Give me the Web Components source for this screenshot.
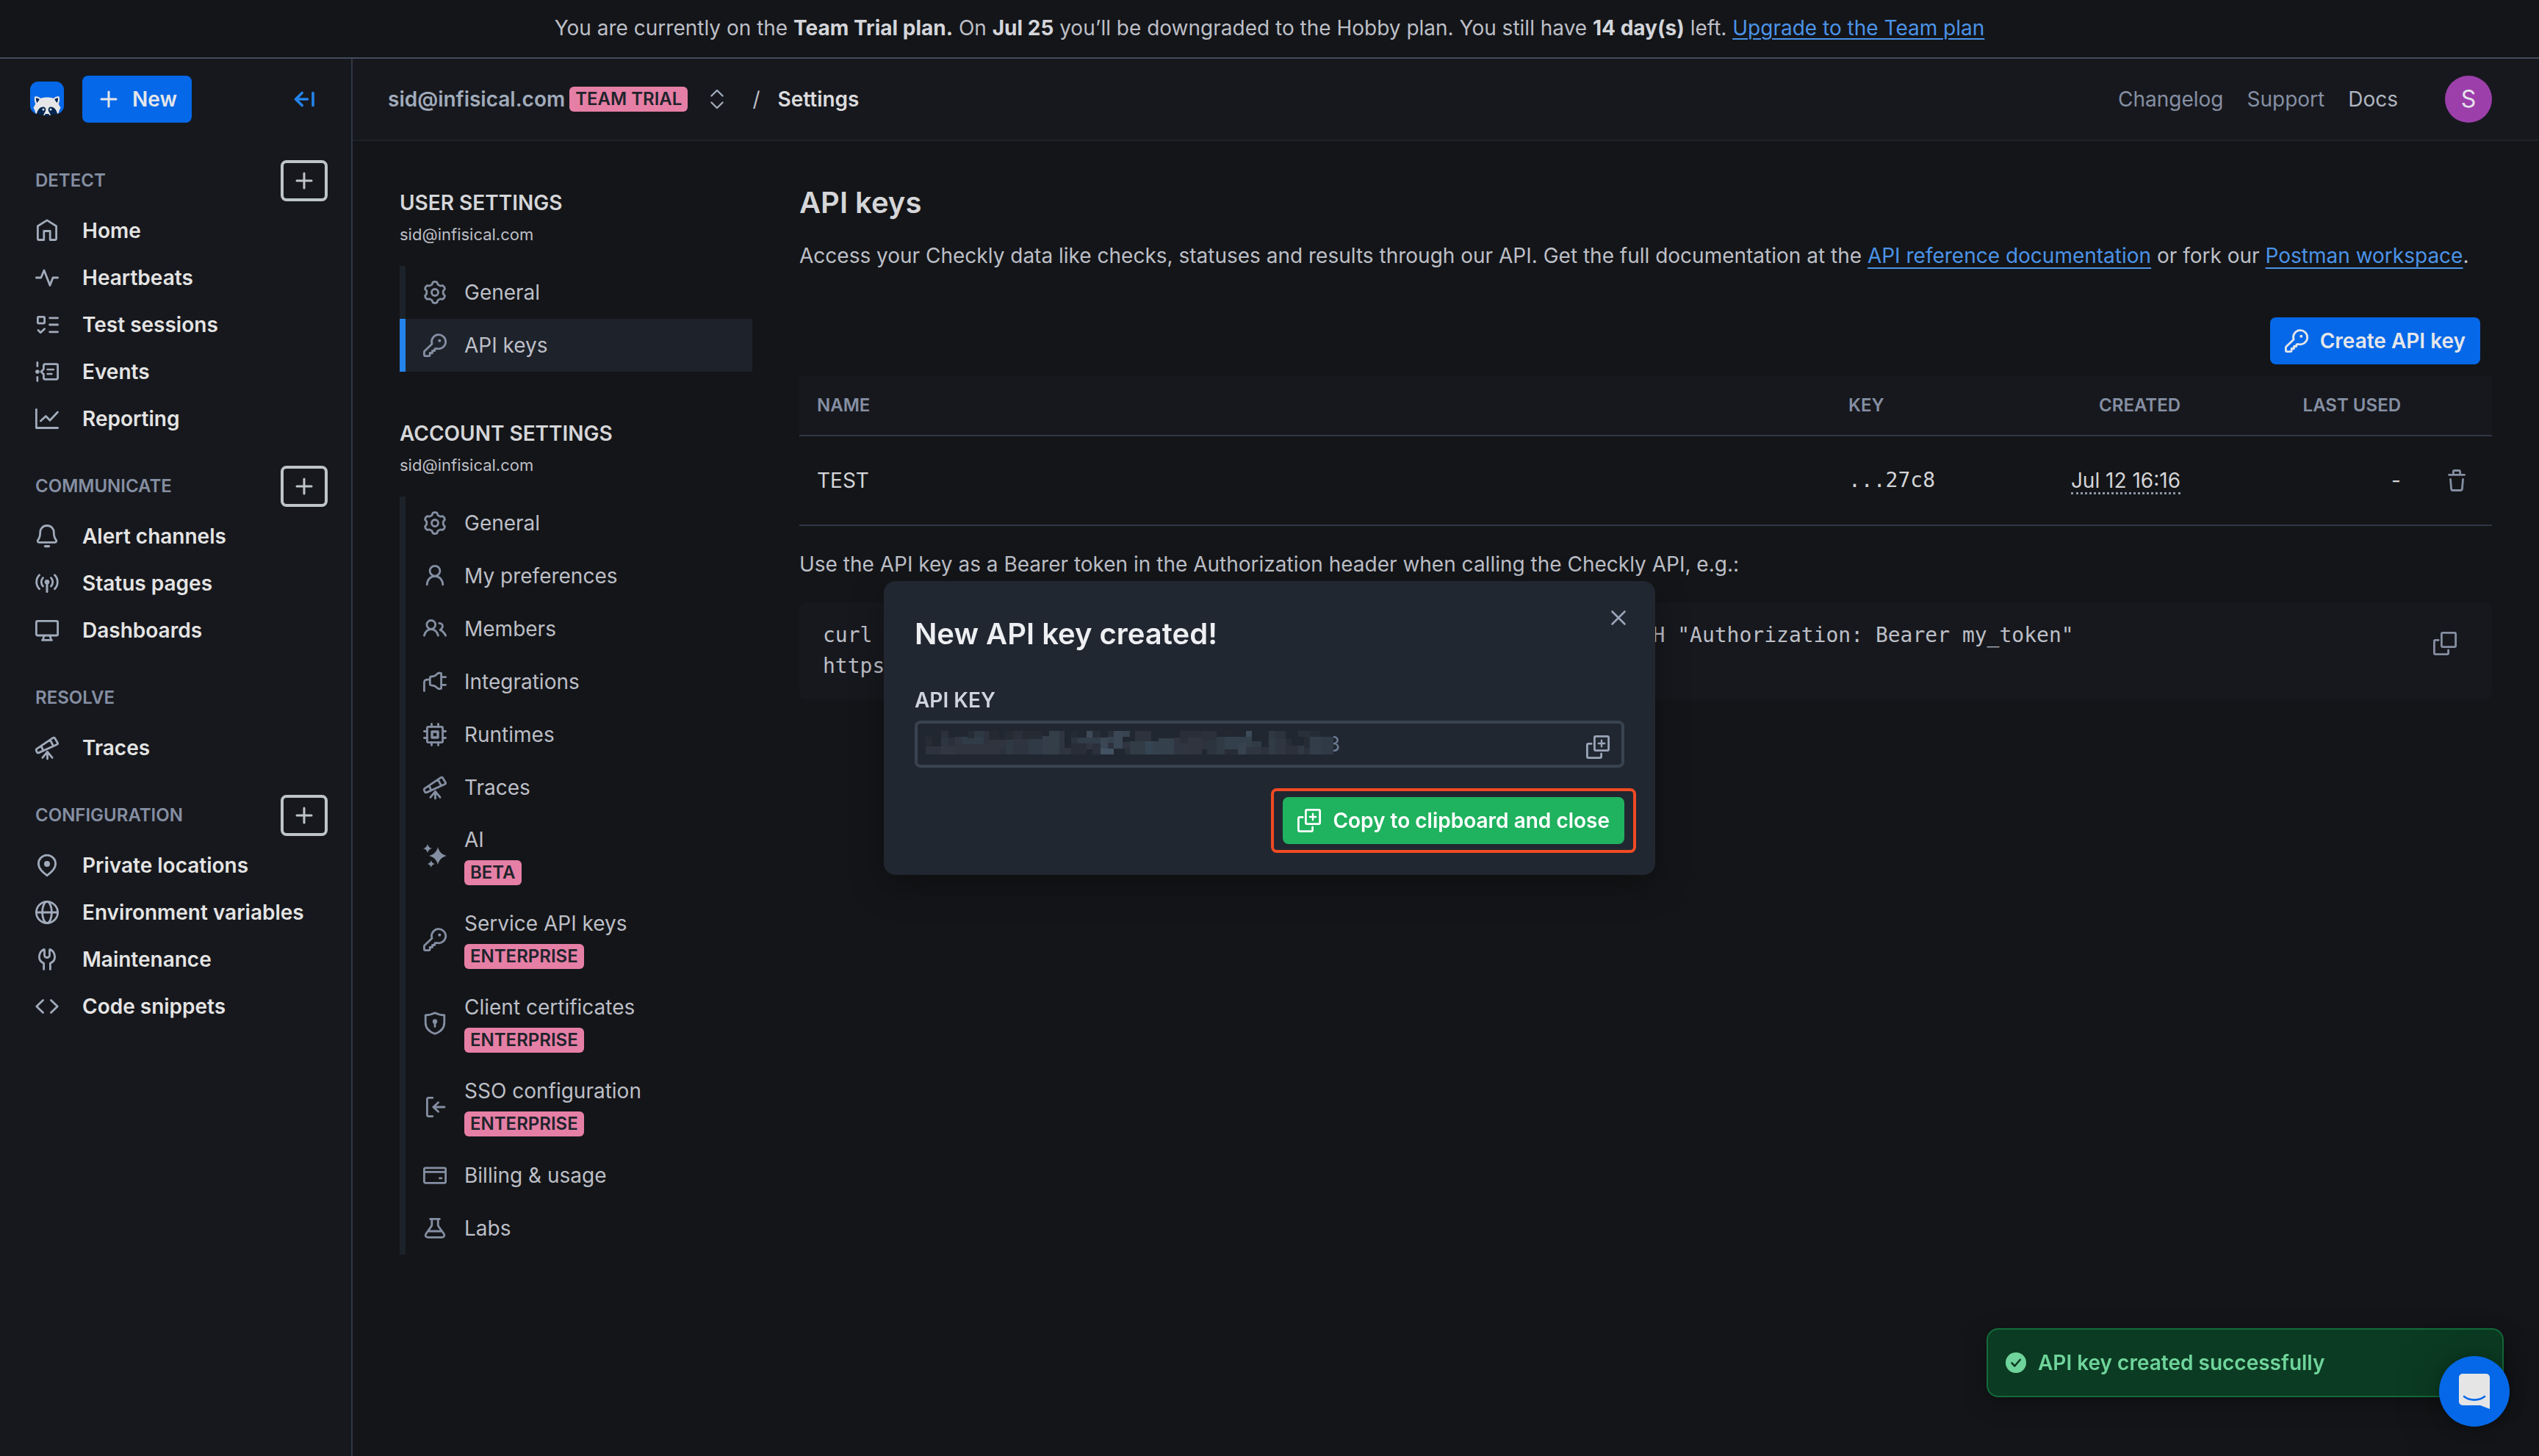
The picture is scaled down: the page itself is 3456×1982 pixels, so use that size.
<!DOCTYPE html>
<html lang="en">
<head>
<meta charset="utf-8">
<title>Settings - API keys</title>
<style>
  :root {
    --bg: #141518;
    --panel: #17181d;
    --raised: #1e222a;
    --line: #2f3845;
    --line-soft: #1d2129;
    --text: #dcdcdd;
    --text-2: #bcbfc7;
    --muted: #a1abbb;
    --faint: #858fa3;
    --blue: #0568e8;
    --link: #4b93e8;
    --pink: #e67fa5;
  }
  html, body { margin: 0; background: var(--bg); }
  body {
    font-family: Inter, "Liberation Sans", sans-serif;
    font-optical-sizing: none;
    font-size: 28px;
    line-height: 40px;
    color: var(--text-2);
  }
</style>
</head>
<body>
<checkly-app></checkly-app>

<script>
const define = (name, html, setup) => {
  const template = document.createElement('template');
  template.innerHTML = '<style>*{box-sizing:border-box}button,input{font:inherit;font-optical-sizing:inherit}</style>' + html;
  customElements.define(name, class extends HTMLElement {
    constructor() {
      super();
      this.attachShadow({ mode: 'open' }).append(template.content.cloneNode(true));
    }
    connectedCallback() { if (setup) setup(this, this.shadowRoot); }
  });
};

/* ---------- icons, all on a 32 unit grid ---------- */
const cogPoints = () => {
  const out = [];
  for (let k = 0; k < 6; k++) {
    for (const [r, d] of [[11.4, -21], [14.2, -11], [14.7, 0], [14.2, 11], [11.4, 21]]) {
      const a = (k * 60 - 90 + d) * Math.PI / 180;
      out.push((16 + r * Math.cos(a)).toFixed(2) + ',' + (16 + r * Math.sin(a)).toFixed(2));
    }
  }
  return out.join(' ');
};
const copyBase = '<rect x="11.4" y="1.4" width="19.2" height="19.2" rx="1.6"/><path d="M7.2 11.4H3a1.6 1.6 0 0 0-1.6 1.6v16A1.6 1.6 0 0 0 3 30.6h16a1.6 1.6 0 0 0 1.6-1.6v-4"/>';
const ICONS = {
  plus: '<path d="M16 6v20M6 16h20" stroke-width="3"/>',
  collapse: '<path d="M13.2 7.5 4.5 16l8.700 8.500M5 16h15.500M28 7.500v17" stroke-width="3.600"/>',
  home: '<path d="M16 1.900 3.400 9.800V27a1.500 1.500 0 0 0 1.500 1.500h6.900v-12h8.400v12h6.900a1.500 1.500 0 0 0 1.500-1.500V9.800z"/>',
  heartbeat: '<path d="M1.400 16h6.400L12 6l8 20.500L24 16h6.600"/>',
  tests: '<rect x="3.400" y="5.400" width="9.200" height="8.800" rx="1"/><path d="M4 23.500l3.200 3.200 5.400-5M19.600 6.800h11M19.600 16h11M19.600 25.800h11"/>',
  events: '<path d="M2.900 3.500v5M2.900 23.500v5"/><circle cx="2.900" cy="16" r="2.800" fill="currentColor" stroke="none"/><path d="M13.200 5.600h15.600a1.800 1.800 0 0 1 1.800 1.800v17.200a1.800 1.800 0 0 1-1.800 1.800H13.200a1.800 1.800 0 0 1-1.800-1.800v-5.200L8 16l3.400-3.400V7.400a1.800 1.800 0 0 1 1.800-1.800z"/><path d="M16.500 13h8.500M16.500 19h6" stroke-width="2.400"/>',
  chart: '<path d="M1.400 3.400v25.100h29.200M7.400 19l7-6.500 5.600 5.800L30.500 7"/>',
  bell: '<path d="M16 1.500c-5.700 0-9.300 4.100-9.300 9.300 0 5.700-.9 7.800-2.900 10-1.200 1.500-.4 3.500 1.400 3.500h21.600c1.800 0 2.600-2 1.400-3.500-2-2.200-2.900-4.300-2.900-10 0-5.200-3.600-9.300-9.300-9.300z"/><path d="M13.500 29.600h5" stroke-width="3.400"/>',
  antenna: '<circle cx="16" cy="14.300" r="3.300" fill="currentColor" stroke="none"/><path d="M16 15v12.600" stroke-width="3"/><path d="M5.600 4.800a13.500 13.500 0 0 0 0 19M26.400 4.800a13.500 13.500 0 0 1 0 19M10.500 8.600a8.300 8.300 0 0 0 0 11.400M21.500 8.600a8.300 8.300 0 0 1 0 11.400"/>',
  monitor: '<rect x="1.400" y="3.400" width="29.200" height="19.600" rx="1.800"/><path d="M12 23.200 10.500 29M20 23.200l1.500 5.800M9.500 29.400h13"/>',
  telescope: '<path d="M2 17.400 24.200 2.400c1-.6 2-.3 2.500.6l3.700 6.200c.5.900.1 1.900-.9 2.300L5 22.600c-1.200.5-2.200.1-2.800-.9l-.8-1.900c-.4-.9-.1-1.800.6-2.400zM8.200 13.800l2.600 5.800M20.400 5.400l3.900 7.800M16.500 31v-9.600M16.500 21.400 9.900 29.400M16.500 21.400l6.600 8"/>',
  pin: '<path d="M16 29.800C10.500 25.400 4.400 20.600 4.400 13.800a11.600 11.600 0 0 1 23.200 0c0 6.800-6.100 11.600-11.600 16z"/><circle cx="16" cy="14" r="4" fill="currentColor" stroke="none"/>',
  globe: '<circle cx="16" cy="16" r="14.600"/><ellipse cx="16" cy="16" rx="6.400" ry="14.600"/><path d="M1.400 16h29.200"/>',
  wrench: '<path d="M11.600 29.600v-8.400C7.700 19.600 5.400 16.600 5.400 12.800c0-4.600 2.300-8.200 5.600-10.200.8-.4 1.500 0 1.500.8v7.400c0 1.300 1.500 2.700 3.500 2.700s3.500-1.400 3.500-2.700V3.400c0-.8.7-1.200 1.500-.8 3.300 2 5.600 5.600 5.600 10.200 0 3.800-2.300 6.800-6.200 8.400v8.400"/>',
  code: '<path d="M10.600 7.600 1.800 16l8.800 8.400M21.400 7.600l8.800 8.400-8.800 8.400"/>',
  cog: '<polygon points="' + cogPoints() + '"/><circle cx="16" cy="16" r="4.500"/>',
  key: '<path d="M12 14.300a9.600 9.600 0 1 1 6.700 6.200l-2.900.3v2.700h-3.300v3H9.200v2.600c0 .9-.6 1.500-1.500 1.500H2.900c-.9 0-1.500-.6-1.500-1.500v-3.900c0-.5.200-1 .6-1.400z"/><circle cx="22.300" cy="9.800" r="2" fill="currentColor" stroke="none"/>',
  user: '<circle cx="16" cy="9.200" r="6.900"/><path d="M5.200 27.800C5.600 21 10 16.300 16 16.300S26.400 21 26.800 27.800"/>',
  users: '<circle cx="10.800" cy="10.400" r="5.900"/><path d="M1.400 25.200c1.400-5.400 4.900-8.600 9.400-8.600s8.200 3.200 9.600 8.600M21.800 8.400c2.800-.2 4.800 1.800 4.600 4.400-.1 2.100-1.400 3.600-3.400 4.600 3.400 1.400 5.800 4.200 7.600 7.800"/>',
  plug: '<path d="M1.400 28.600V17.400c0-2.600 1.700-4.300 4.300-4.300H9M11.200 9c3.800-.2 5.200-.8 7-2.900 1.600-2 4-2.500 6.400-1.500v20.600c-2.400 1-4.800.5-6.400-1.500-1.800-2.100-3.200-2.700-7-2.900-1.200-.1-1.900-.8-1.900-1.900v-8c0-1.100.7-1.800 1.900-1.900zM24.600 9.600h6M24.600 20.300h6"/>',
  cpu: '<rect x="5.400" y="5.400" width="21.200" height="21.200" rx="1.600"/><rect x="12" y="12" width="8" height="8" stroke-width="3.400"/><path d="M11.500 1.400v4M20.500 1.400v4M11.500 26.600v4M20.500 26.600v4M1.400 11.500h4M1.400 20.500h4M26.600 11.500h4M26.600 20.500h4"/>',
  sparkles: '<g fill="currentColor" stroke="none"><path d="M20 4c1.900 6.800 5.200 10.100 12 12-6.800 1.900-10.100 5.200-12 12-1.900-6.800-5.200-10.100-12-12 6.800-1.900 10.100-5.200 12-12z"/><path d="M6 0c.9 3.400 2.600 5.100 6 6-3.400.9-5.100 2.600-6 6-.9-3.400-2.600-5.100-6-6 3.400-.9 5.100-2.600 6-6z"/><path d="M10.800 22c.8 2.900 2.200 4.200 5 5-2.800.8-4.200 2.100-5 5-.8-2.900-2.200-4.200-5-5 2.800-.8 4.200-2.100 5-5z"/></g>',
  shield: '<path d="M16 1.800c3.600 2 8 3 12.800 3.200V15c0 7.600-4.600 12.400-12.800 15.300C7.800 27.400 3.200 22.600 3.200 15V5C8 4.800 12.400 3.800 16 1.800z"/><circle cx="16" cy="13.400" r="3.200" fill="currentColor" stroke="none"/><path d="M16 14v6.600"/>',
  signin: '<path d="M12.800 3.400H7.200A1.800 1.800 0 0 0 5.400 5.200v21.600a1.800 1.800 0 0 0 1.800 1.800h5.600M29 16H14M20.600 9.800 13.800 16l6.800 6.200"/>',
  card: '<rect x="1.400" y="5.800" width="29.200" height="20.600" rx="1.800"/><path d="M1.400 11.400h29.200M22.400 19.800h2.600"/>',
  flask: '<path d="M9.600 3.400h12.800M11.800 3.800v7.400c0 1-.3 1.700-.9 2.500L4 23.200c-1.800 2.600-.6 5.200 2.400 5.200h19.200c3 0 4.200-2.600 2.400-5.200l-6.900-9.500c-.6-.8-.9-1.500-.9-2.500V3.800M7 20h18"/>',
  trash: '<path d="M5.400 8.300h21.200M11.400 7.800V4a1.500 1.500 0 0 1 1.500-1.500h6.200A1.500 1.500 0 0 1 20.600 4v3.800M7.500 14.500l1.100 13.200a2 2 0 0 0 2 1.800h10.800a2 2 0 0 0 2-1.800l1.100-13.200"/>',
  copy: copyBase,
  copyplus: copyBase + '<path d="M21 6.800v8.400M16.800 11h8.400" stroke-width="2.400"/>',
  updown: '<path d="M8.400 11.500 16 4l7.600 7.500M8.400 20.500 16 28l7.600-7.500" stroke-width="2.400"/>',
  close: '<path d="M7.500 7.500l17 17M24.500 7.500l-17 17" stroke-width="2.600"/>',
  check: '<circle cx="16" cy="16" r="14" fill="currentColor" stroke="none"/><path d="M10.500 16.500l3.800 4 7.400-8.500" stroke="#0b3b22" stroke-width="2.600"/>'
};
define('ck-icon', `
  <style>
    :host { display: inline-flex; flex: none; width: 32px; height: 32px; }
    svg { width: 100%; height: 100%; fill: none; stroke: currentColor; stroke-width: 2.8; stroke-linecap: round; stroke-linejoin: round; overflow: visible; }
  </style>
  <svg viewBox="0 0 32 32" aria-hidden="true"></svg>`,
  (el, root) => { root.querySelector('svg').innerHTML = ICONS[el.getAttribute('name')]; });

/* ---------- small parts ---------- */
define('ck-badge', `
  <style>
    :host { display: inline-flex; align-items: center; height: 34px; padding: 0 8px; border-radius: 6px;
      background: var(--pink); color: #1f242c; font-size: 24px; font-weight: 600; line-height: 34px; }
  </style><slot></slot>`);

define('ck-button', `
  <style>
    :host { display: inline-flex; }
    button { display: inline-flex; align-items: center; gap: 16px; height: 64px; padding: 0 20px; border: 0;
      border-radius: 8px; background: var(--button-bg, var(--blue)); color: var(--button-fg, #e4e6ea);
      font-weight: 600; white-space: nowrap; }
    .icon { display: flex; }
  </style>
  <button type="button"><span class="icon"></span><span><slot></slot></span></button>`,
  (el, root) => { root.querySelector('.icon').innerHTML = `<ck-icon name="${el.getAttribute('icon')}"></ck-icon>`; });

define('trial-banner', `
  <style>
    :host { display: flex; justify-content: center; align-items: center; height: 80px; padding-bottom: 2px; box-sizing: border-box;
      border-bottom: 2px solid #414c5b; white-space: nowrap; }
    a { color: var(--link); text-underline-offset: 4px; text-decoration-thickness: 2px; }
    b { font-weight: 700; color: #d3d5da; }
  </style>
  <div>You are currently on the <b>Team Trial plan.</b> On <b>Jul 25</b> you’ll be downgraded to the Hobby plan. You still have <b>14 day(s)</b> left. <a href="#upgrade">Upgrade to the Team plan</a></div>`);

/* ---------- main navigation ---------- */
define('nav-item', `
  <style>
    :host { display: block; }
    a { display: flex; align-items: center; gap: 32px; height: 64px; color: #e4e4e4; font-weight: 600; text-decoration: none; white-space: nowrap; }
    span { display: flex; color: var(--muted); }
  </style>
  <a href="#"><span></span><slot></slot></a>`,
  (el, root) => { root.querySelector('span').innerHTML = `<ck-icon name="${el.getAttribute('icon')}"></ck-icon>`; });

define('nav-group', `
  <style>
    :host { display: block; }
    header { display: flex; align-items: center; justify-content: space-between; height: 56px; margin-bottom: 8px; }
    h2 { margin: 0; font-size: 24px; font-weight: 600; color: var(--faint); }
    button { display: flex; align-items: center; justify-content: center; width: 64px; height: 56px; padding: 0;
      border: 4px solid #bec5c9; border-radius: 8px; background: none; color: #bec5c9; }
    :host(:not([addable])) button { display: none; }
  </style>
  <header><h2></h2><button type="button" aria-label="Add"><ck-icon name="plus"></ck-icon></button></header>
  <slot></slot>`,
  (el, root) => { root.querySelector('h2').textContent = el.getAttribute('heading'); });

define('raccoon-logo', `
  <style>:host { display: block; width: 48px; height: 48px; } svg { display: block; width: 48px; height: 48px; }</style>
  <svg viewBox="0 0 48 48" aria-label="Checkly">
    <rect x="1" y="0" width="46" height="44" rx="11" fill="#0568e8"/>
    <path d="M7.300 20.500c2.600-.9 5.600-.2 7.600 2.400 5.200-2 13-2 18.200 0 2-2.600 5-3.300 7.600-2.400.8 3.400.6 6.800-1 9.800 1 2.300 1.700 3.600 2.900 5.300l-1.600 3-1.600 5H8.600l-1.600-5-1.600-3c1.200-1.700 1.900-3 2.900-5.300-1.600-3-1.800-6.400-1-9.800z" fill="#e6e6e8"/>
    <path d="M9 22.500c2-.3 3.600.5 4.700 2L10.500 29c-1.200-2-1.700-4.200-1.500-6.500zM39 22.500c-2-.3-3.600.5-4.700 2l3.200 4.500c1.200-2 1.700-4.200 1.500-6.500z" fill="#04244f"/>
    <path d="M10 43.800c1.200-5.600 4.600-9.600 9-9.300 2.800.3 3.800 2.300 3.100 5.300l-2.300 5.400C16 45.600 13 45 10 43.800zM38 43.800c-1.200-5.600-4.600-9.600-9-9.300-2.800.3-3.800 2.300-3.100 5.300l2.300 5.400C32 45.600 35 45 38 43.800z" fill="#04244f"/>
    <circle cx="19" cy="38" r="1.500" fill="#e6e6e8"/><circle cx="29" cy="38" r="1.500" fill="#e6e6e8"/>
    <path d="M19 46c1-3.500 3-5.800 5-5.800s4 2.300 5 5.800z" fill="#e6e6e8"/>
    <path d="M20.600 44.800c2-1 4.800-1 6.800 0-.6 1.800-1.800 2.800-3.400 2.800s-2.800-1-3.400-2.800z" fill="#04244f"/>
  </svg>`);

define('side-bar', `
  <style>
    :host { display: block; flex: none; box-sizing: border-box; width: 480px; padding: 0 32px 48px 48px; background: var(--panel); border-right: 2px solid var(--line); }
    .top { display: flex; align-items: center; height: 110px; margin-left: -8px; }
    ck-button { margin-left: 24px; }
    .collapse { display: flex; margin: 0 16px 0 auto; padding: 0; border: 0; background: none; color: #2484ec; }
    nav { display: flex; flex-direction: column; gap: 32px; margin-top: 28px; }
  </style>
  <div class="top">
    <raccoon-logo></raccoon-logo>
    <ck-button icon="plus">New</ck-button>
    <button class="collapse" type="button" aria-label="Collapse sidebar"><ck-icon name="collapse"></ck-icon></button>
  </div>
  <nav>
    <nav-group heading="DETECT" addable>
      <nav-item icon="home">Home</nav-item>
      <nav-item icon="heartbeat">Heartbeats</nav-item>
      <nav-item icon="tests">Test sessions</nav-item>
      <nav-item icon="events">Events</nav-item>
      <nav-item icon="chart">Reporting</nav-item>
    </nav-group>
    <nav-group heading="COMMUNICATE" addable>
      <nav-item icon="bell">Alert channels</nav-item>
      <nav-item icon="antenna">Status pages</nav-item>
      <nav-item icon="monitor">Dashboards</nav-item>
    </nav-group>
    <nav-group heading="RESOLVE">
      <nav-item icon="telescope">Traces</nav-item>
    </nav-group>
    <nav-group heading="CONFIGURATION" addable>
      <nav-item icon="pin">Private locations</nav-item>
      <nav-item icon="globe">Environment variables</nav-item>
      <nav-item icon="wrench">Maintenance</nav-item>
      <nav-item icon="code">Code snippets</nav-item>
    </nav-group>
  </nav>`);

/* ---------- header ---------- */
define('top-bar', `
  <style>
    :host { display: flex; align-items: center; justify-content: space-between; box-sizing: border-box; height: 112px; padding: 0 64px 0 48px;
      background: var(--panel); border-bottom: 2px solid var(--line-soft); white-space: nowrap; }
    .crumbs, .links { display: flex; align-items: center; }
    .account { display: flex; align-items: center; gap: 6px; padding: 0; border: 0; background: none; color: var(--muted); font-weight: 600; }
    .account ck-icon { margin-left: 18px; }
    .slash { margin: 0 24px 0 32px; }
    .current { color: var(--text); font-weight: 600; }
    .links { gap: 32px; }
    a { color: var(--faint); text-decoration: none; }
    a.strong { color: #b0b6c1; }
    .avatar { display: flex; align-items: center; justify-content: center; width: 64px; height: 64px; margin-left: 32px; padding: 0;
      border: 0; border-radius: 50%; background: #9c3fab; color: #e6e2ea; font-size: 32px; }
  </style>
  <div class="crumbs">
    <button class="account" type="button"><span>sid@infisical.com</span><ck-badge>TEAM TRIAL</ck-badge><ck-icon name="updown"></ck-icon></button>
    <span class="slash">/</span><span class="current">Settings</span>
  </div>
  <div class="links">
    <a href="#changelog">Changelog</a><a href="#support">Support</a><a class="strong" href="#docs">Docs</a>
    <button class="avatar" type="button">S</button>
  </div>`);

/* ---------- settings menu ---------- */
define('settings-link', `
  <style>
    :host { display: block; }
    a { display: flex; align-items: center; gap: 24px; min-height: 72px; padding: 17px 0 17px 24px; border-left: 8px solid #1c222a;
      color: var(--text-2); text-decoration: none; line-height: 36px; }
    .icon { display: flex; color: var(--faint); }
    .label { display: flex; flex-direction: column; align-items: flex-start; gap: 10px; }
    :host([active]) a { background: var(--raised); border-left-color: #2484ec; }
  </style>
  <a href="#"><span class="icon"></span><span class="label"><span><slot></slot></span></span></a>`,
  (el, root) => {
    root.querySelector('.icon').innerHTML = `<ck-icon name="${el.getAttribute('icon')}"></ck-icon>`;
    const tag = el.getAttribute('tag');
    if (tag) root.querySelector('.label').insertAdjacentHTML('beforeend', `<ck-badge>${tag}</ck-badge>`);
  });

define('settings-section', `
  <style>
    :host { display: block; }
    h3 { margin: 0; font-size: 28px; font-weight: 600; line-height: 44px; color: #d5d6d9; }
    p { margin: 0 0 22px; font-size: 22px; line-height: 42px; }
  </style>
  <h3></h3><p>sid@infisical.com</p><slot></slot>`,
  (el, root) => { root.querySelector('h3').textContent = el.getAttribute('heading'); });

define('settings-menu', `
  <style>:host { display: flex; flex-direction: column; gap: 62px; flex: none; width: 480px; }</style>
  <settings-section heading="USER SETTINGS">
    <settings-link icon="cog">General</settings-link>
    <settings-link icon="key" active>API keys</settings-link>
  </settings-section>
  <settings-section heading="ACCOUNT SETTINGS">
    <settings-link icon="cog">General</settings-link>
    <settings-link icon="user">My preferences</settings-link>
    <settings-link icon="users">Members</settings-link>
    <settings-link icon="plug">Integrations</settings-link>
    <settings-link icon="cpu">Runtimes</settings-link>
    <settings-link icon="telescope">Traces</settings-link>
    <settings-link icon="sparkles" tag="BETA">AI</settings-link>
    <settings-link icon="key" tag="ENTERPRISE">Service API keys</settings-link>
    <settings-link icon="shield" tag="ENTERPRISE">Client certificates</settings-link>
    <settings-link icon="signin" tag="ENTERPRISE">SSO configuration</settings-link>
    <settings-link icon="card">Billing &amp; usage</settings-link>
    <settings-link icon="flask">Labs</settings-link>
  </settings-section>`);

/* ---------- content ---------- */
define('key-table', `
  <style>
    :host { display: block; }
    table { width: 100%; border-collapse: separate; border-spacing: 0; table-layout: fixed; }
    th, td { padding: 0 24px; text-align: left; border-bottom: 2px solid var(--line); white-space: nowrap; }
    th { height: 82px; background: var(--panel); color: var(--faint); font-size: 24px; font-weight: 600; }
    td { height: 122px; color: #d3d4d7; }
    .key { width: 240px; } .created { width: 260px; } .used { width: 300px; } .act { width: 100px; }
    th.r, td.r { text-align: right; }
    td.key { font-family: "DejaVu Sans Mono", monospace; }
    time { display: inline-block; line-height: 32px; border-bottom: 3px dotted #8d98a8; }
    td.act { padding: 0 32px 0 0; text-align: right; line-height: 0; }
    button { padding: 0; border: 0; background: none; color: var(--faint); vertical-align: top; line-height: 0; }
  </style>
  <table>
    <thead><tr><th>NAME</th><th class="key">KEY</th><th class="created r">CREATED</th><th class="used r">LAST USED</th><th class="act"></th></tr></thead>
    <tbody><tr><td>TEST</td><td class="key">...27c8</td><td class="r"><time>Jul 12 16:16</time></td><td class="r">-</td>
      <td class="act"><button type="button" aria-label="Delete"><ck-icon name="trash"></ck-icon></button></td></tr></tbody>
  </table>`);

define('code-block', `
  <style>
    :host { display: flex; justify-content: space-between; align-items: flex-start; padding: 24px 48px 24px 32px; border-radius: 8px; background: var(--panel); }
    pre { margin: 0; font: 28px/42px "DejaVu Sans Mono", monospace; }
    button { margin-top: 16px; padding: 0; border: 0; background: none; color: var(--faint); line-height: 0; }
  </style>
  <pre><slot></slot></pre>
  <button type="button" aria-label="Copy"><ck-icon name="copy"></ck-icon></button>`);

define('api-keys-page', `
  <style>
    :host { display: block; flex: 1; min-width: 0; }
    h1 { margin: 0; font-size: 40px; line-height: 44px; font-weight: 600; color: #d5d6d9; }
    p { margin: 0; line-height: 44px; }
    .intro { margin-top: 28px; white-space: nowrap; }
    a { color: var(--link); text-underline-offset: 6px; text-decoration-thickness: 2px; }
    .actions { display: flex; justify-content: flex-end; padding: 0 16px; margin: 62px 0 16px; }
    .usage { margin: 30px 0; }
  </style>
  <h1>API keys</h1>
  <p class="intro">Access your Checkly data like checks, statuses and results through our API. Get the full documentation at the <a href="#reference">API reference documentation</a> or fork our <a href="#postman">Postman workspace</a>.</p>
  <div class="actions"><ck-button icon="key">Create API key</ck-button></div>
  <key-table></key-table>
  <p class="usage">Use the API key as a Bearer token in the Authorization header when calling the Checkly API, e.g.:</p>
  <code-block>curl -H "accept: application/json" -H "X-Checkly-Account: acc_id" -H "Authorization: Bearer my_token"
https://api.checklyhq.com/v1/checks</code-block>`);

/* ---------- dialog ---------- */
const MOSAIC = [
  [60,96,27,39,'#262b34'],[60,135,63,33,'#2c323e'],[123,72,30,27,'#2b303b'],[123,99,30,36,'#2c3541'],[153,99,27,36,'#2b303c'],
  [123,135,57,33,'#323643'],[180,96,30,30,'#2f3541'],[210,96,87,30,'#303c48'],[231,72,27,30,'#262c35'],[258,72,40,24,'#2e3843'],
  [298,72,20,54,'#2c333e'],[180,126,180,42,'#2f343f'],[318,72,42,36,'#242932'],[318,108,72,36,'#2f343f'],[360,144,30,24,'#2b323d'],
  [381,72,36,36,'#252b33'],[390,108,27,60,'#2e3944'],[417,72,39,33,'#2a2f39'],[417,105,63,63,'#2e3440'],[456,72,80,33,'#252a33'],
  [480,105,57,63,'#303a46'],[537,93,27,75,'#343d49'],[564,72,43,96,'#333e49'],[607,72,20,69,'#2f3641'],[607,141,47,27,'#2e3541'],
  [654,72,27,27,'#252b34'],[654,99,27,24,'#2c343f'],[654,123,63,45,'#282d38'],[681,99,93,24,'#313d48'],[717,72,24,27,'#3d4957'],
  [717,123,24,24,'#303541'],[741,72,33,27,'#282e38'],[741,123,33,45,'#2a303c'],[774,99,30,45,'#3b4654'],[774,144,54,24,'#435262'],
  [804,72,24,24,'#2a303a'],[804,96,24,24,'#37424f'],[804,120,24,24,'#2c333e'],[828,72,36,72,'#3b4755'],[864,72,30,24,'#384350'],
  [864,117,30,27,'#2f3440'],[873,144,21,24,'#2a303a'],[894,114,63,54,'#313c47'],[915,72,66,42,'#2d323d'],[957,114,54,54,'#354452'],
  [987,114,24,54,'#34414d'],[1011,102,63,66,'#34404b'],[1074,99,24,69,'#30353f'],[1074,123,57,45,'#2f3641'],[1098,72,90,27,'#292e38'],
  [1098,99,33,24,'#2b2f39'],[1131,99,57,69,'#30343f'],[1188,72,60,36,'#2b303a'],[1188,108,21,39,'#2c333d'],[1209,108,39,60,'#2c343f'],
  [1248,96,33,72,'#2f3a45'],[1281,96,87,51,'#33404c'],[1281,147,54,21,'#272c37'],[1335,123,33,45,'#36434e'],[1281,72,27,24,'#232831'],
  [1368,72,24,24,'#3d4a58'],[1368,96,24,42,'#33404a'],[1392,114,39,24,'#303b47'],[1368,138,63,30,'#2f3541'],[1431,138,30,30,'#2c323d'],
  [1461,72,27,33,'#303843'],[1461,105,27,63,'#303b46'],[1488,72,42,33,'#2b333d'],[1488,105,42,63,'#2f3541'],[1530,105,24,27,'#282e38'],
  [1530,132,54,36,'#2b303b'],[1580,72,50,25,'#2a303b'],[1580,132,24,36,'#303843'],[1604,97,26,48,'#262c36'],[1604,145,26,23,'#2b323d'],
  [1630,97,66,71,'#333d49'],[1676,97,49,71,'#303a46'],[1630,72,40,25,'#262c35']
];
define('key-dialog', `
  <style>
    :host { position: fixed; inset: 0; display: flex; align-items: center; justify-content: center; }
    section { width: 1050px; padding: 42px; border-radius: 16px; background: #212731; box-shadow: 0 16px 48px rgba(0,0,0,.3); }
    header { display: flex; justify-content: space-between; align-items: flex-start; margin-bottom: 40px; }
    h2 { margin: 0; font-size: 40px; line-height: 60px; font-weight: 600; color: #eeeff2; }
    .close { display: flex; margin: -8px -8px 0 0; padding: 0; border: 0; background: none; color: #9aa5b8; line-height: 0; }
    label { display: block; margin-bottom: 8px; line-height: 40px; font-weight: 600; color: #cfd3dd; }
    .field { position: relative; display: flex; align-items: flex-end; height: 64px; padding: 0 16px 8px 0; border: 4px solid #394350; border-radius: 8px; }
    input { flex: 1; min-width: 0; height: 40px; padding: 0 0 0 558px; border: 0; background: none; color: #6b7c92; outline: 0; }
    .mosaic { position: absolute; left: 11px; top: 10px; width: 555px; height: 32px; }
    .copy { padding: 0; border: 0; background: none; color: #9aa5b8; line-height: 0; }
    footer { display: flex; justify-content: flex-end; margin-top: 40px; }
    .marked { position: relative; display: flex; --button-bg: #1fb25f; --button-fg: #fff; }
    .marked::after { content: ""; position: absolute; inset: -12px -16px; border: 4px solid #f04a24; border-radius: 8px; }
  </style>
  <section role="dialog" aria-labelledby="title">
    <header><h2 id="title">New API key created!</h2><button class="close" type="button" aria-label="Close"><ck-icon name="close"></ck-icon></button></header>
    <label for="key">API KEY</label>
    <div class="field">
      <input id="key" type="text" value="3" readonly>
      <svg class="mosaic" viewBox="60 72 1665 96" preserveAspectRatio="none" shape-rendering="crispEdges" aria-hidden="true"><rect x="60" y="72" width="1665" height="96" fill="#212731"/></svg>
      <button class="copy" type="button" aria-label="Copy"><ck-icon name="copyplus"></ck-icon></button>
    </div>
    <footer><div class="marked"><ck-button icon="copyplus">Copy to clipboard and close</ck-button></div></footer>
  </section>`,
  (el, root) => {
    root.querySelector('.mosaic').innerHTML += MOSAIC.map(([x, y, w, h, c]) => `<rect x="${x}" y="${y}" width="${w}" height="${h}" fill="${c}"/>`).join('');
  });

define('toast-message', `
  <style>
    :host { position: fixed; right: 48px; bottom: 80px; box-sizing: border-box; display: flex; align-items: center; gap: 14px; width: 704px; height: 94px; padding: 0 22px;
      border: 2px solid #136b3b; border-radius: 16px; background: #0b3b22; color: #6fd49b; font-weight: 600; box-shadow: 0 8px 32px rgba(0,0,0,.3); }
  </style>
  <ck-icon name="check"></ck-icon><span role="status"><slot></slot></span>`);

define('chat-launcher', `
  <style>
    :host { position: fixed; right: 40px; bottom: 40px; }
    button { display: flex; align-items: center; justify-content: center; width: 96px; height: 96px; padding: 0; border: 0; border-radius: 50%;
      background: var(--blue); box-shadow: 0 2px 12px rgba(0,0,0,.2), 0 4px 64px rgba(0,0,0,.3); }
    svg { width: 42px; height: 48px; }
  </style>
  <button type="button" aria-label="Open chat">
    <svg viewBox="0 0 42 48"><path d="M5 0h32a5 5 0 0 1 5 5v43l-13-5H5a5 5 0 0 1-5-5V5a5 5 0 0 1 5-5z" fill="#e5e5e6"/>
    <path d="M7 31c8 6.200 20 6.200 28 0" fill="none" stroke="#0568e8" stroke-width="2.600" stroke-linecap="round"/></svg>
  </button>`);

define('checkly-app', `
  <style>
    :host { display: flex; flex-direction: column; min-height: 100vh; }
    .body { display: flex; flex: 1; }
    .main { flex: 1; min-width: 0; }
    main { display: flex; gap: 64px; padding: 62px 64px 64px; }
  </style>
  <trial-banner></trial-banner>
  <div class="body">
    <side-bar></side-bar>
    <div class="main">
      <top-bar></top-bar>
      <main><settings-menu></settings-menu><api-keys-page></api-keys-page></main>
    </div>
  </div>
  <key-dialog></key-dialog>
  <toast-message>API key created successfully</toast-message>
  <chat-launcher></chat-launcher>`);
</script>
</body>
</html>
